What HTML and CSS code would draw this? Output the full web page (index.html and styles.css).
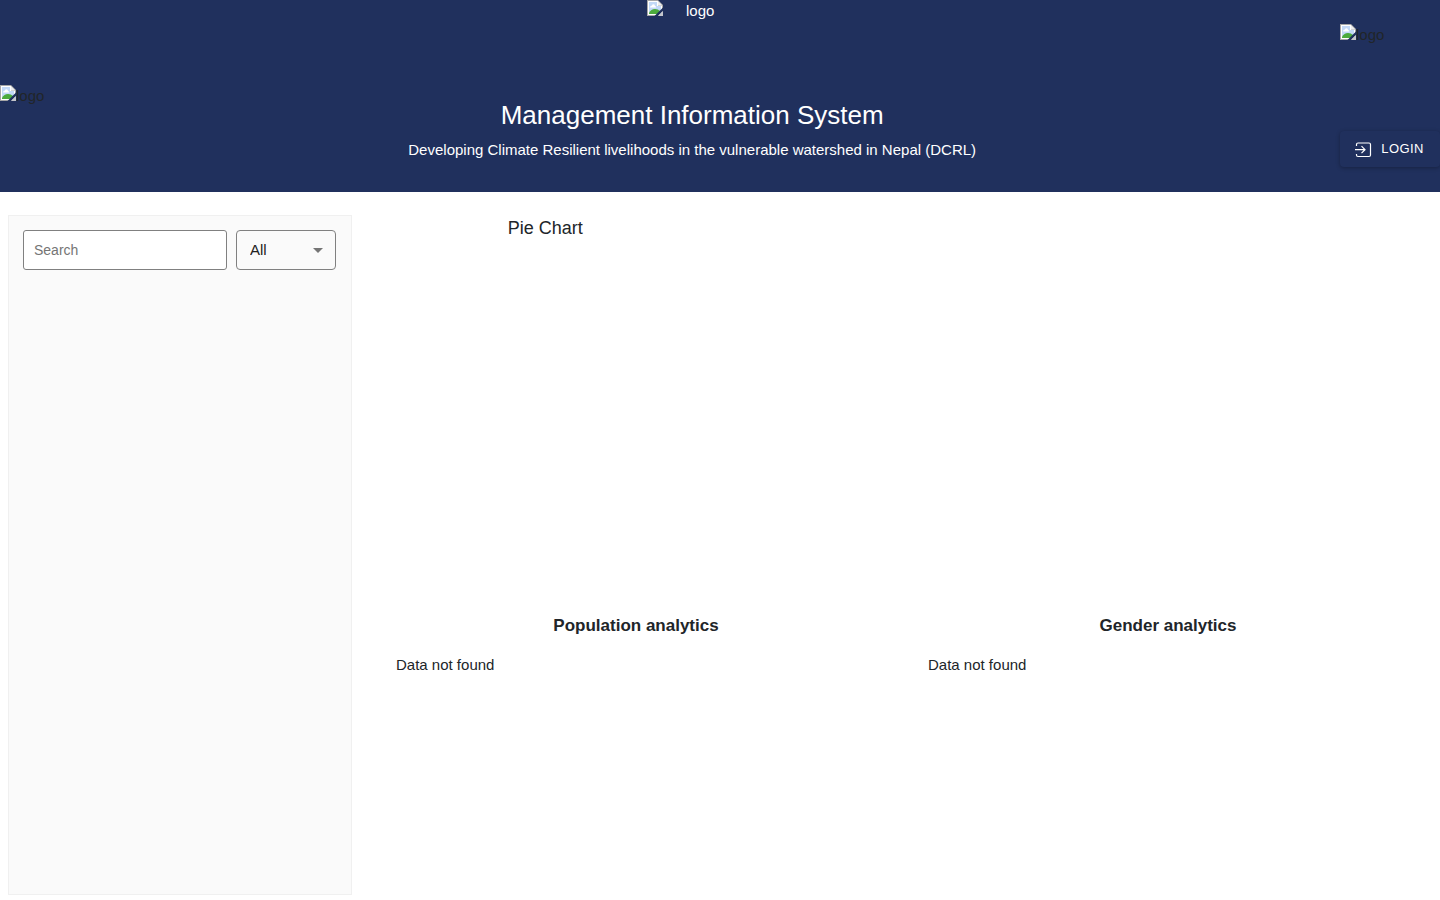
FILE: index.html
```html
<!DOCTYPE html>
<html lang="en">
<head>
<meta charset="utf-8">
<meta name="viewport" content="width=device-width, initial-scale=1">
<title>Management Information System</title>
<link rel="stylesheet" href="styles.css">
</head>
<body>
<svg class="sprite" aria-hidden="true">
  <symbol id="image-icon" viewBox="0 0 16 16">
    <path d="M0 0h11l5 5v11H0z" fill="#a6a6a6"/>
    <path d="M1 1h10v4.500h4V15H1z" fill="#fff"/>
    <path d="M2 2h8v4h4v8H2z" fill="#c3d9f7"/>
    <path d="M11 1v4h4z" fill="#eee"/>
    <path d="M3 7.500q0-1.700 1.600-1.700Q5 4 6.500 4.200 8 4.300 8 6q1.200 0 1.200 1.500z" fill="#fff"/>
    <path d="M2 14v-1q2-4 6-4 3 0 5 2v3z" fill="#4cab3c"/>
    <path d="M7.500 16L16 7.500V11L11 16z" fill="#20305d"/>
    <path d="M11 16L16 11V16z" fill="#c4c6cc"/>
  </symbol>
</svg>

<header class="header">
  <div class="logo"><svg class="logo-icon"><use href="#image-icon"/></svg><span>logo</span></div>
  <div class="brand">
    <div class="logo logo-wide"><svg class="logo-icon"><use href="#image-icon"/></svg><span class="logo-label">logo</span></div>
    <h1 class="title">Management Information System</h1>
    <p class="subtitle">Developing Climate Resilient livelihoods in the vulnerable watershed in Nepal (DCRL)</p>
  </div>
  <div class="account">
    <div class="logo"><svg class="logo-icon"><use href="#image-icon"/></svg><span>logo</span></div>
    <button class="login" type="button">
      <svg class="login-icon" viewBox="0 0 18 18" fill="none" stroke="currentColor" aria-hidden="true">
        <path d="M2.500 6V4.500a1.500 1.500 0 0 1 1.500-1.500h11a1.500 1.500 0 0 1 1.500 1.500v10.500a1.500 1.500 0 0 1-1.500 1.500H4a1.500 1.500 0 0 1-1.500-1.500V14" stroke-width="1.200"/>
        <path d="M1 9.700h9.500M7.500 6.200L11 9.700l-3.500 3.500" stroke-width="1.200"/>
      </svg>
      Login
    </button>
  </div>
</header>

<div class="layout">
  <aside class="sidebar">
    <form class="filters">
      <input class="search" type="search" placeholder="Search" aria-label="Search">
      <div class="select-wrap">
        <select class="select" aria-label="Filter"><option>All</option></select>
        <svg class="select-arrow" viewBox="0 0 24 24" aria-hidden="true"><path d="M7 10l5 5 5-5z" fill="currentColor"/></svg>
      </div>
    </form>
  </aside>
  <main class="main">
    <section class="charts">
      <h2 class="chart-title">Pie Chart</h2>
    </section>
    <div class="analytics">
      <section class="panel">
        <h3 class="panel-title">Population analytics</h3>
        <p class="panel-text">Data not found</p>
      </section>
      <section class="panel">
        <h3 class="panel-title">Gender analytics</h3>
        <p class="panel-text">Data not found</p>
      </section>
    </div>
  </main>
</div>
</body>
</html>
```

FILE: styles.css
```css
* { box-sizing: border-box; }

body {
  margin: 0;
  min-height: 100vh;
  display: flex;
  flex-direction: column;
  background: #fff;
  color: #212529;
  font: 15px/22px "Liberation Sans", Arial, sans-serif;
}

h1, h2, h3, p { margin: 0; font-weight: 400; }

.sprite { display: none; }

.header {
  display: flex;
  align-items: center;
  justify-content: space-between;
  min-height: 192px;
  background: #20305d;
}

.logo { display: flex; align-items: flex-start; }
.logo-icon { width: 16px; height: 16px; flex: none; }

.brand {
  align-self: stretch;
  display: flex;
  flex-direction: column;
  align-items: center;
  color: #fff;
  text-align: center;
}
.logo-wide { width: 90px; height: 100px; }
.logo-label { flex: 1; }
.title { font-size: 26px; line-height: 30px; }
.subtitle { margin-top: 9px; }

.account {
  display: flex;
  flex-direction: column;
  gap: 85px;
  width: 100px;
  padding-bottom: 1px;
}

.login {
  display: flex;
  align-items: center;
  justify-content: center;
  gap: 9px;
  height: 36px;
  padding: 0 2px 0 0;
  border: 0;
  border-radius: 4px;
  background: #20305d;
  box-shadow: 0 1px 4px rgba(0, 0, 0, 0.3);
  color: #fff;
  font: 13px/22px "Liberation Sans", Arial, sans-serif;
  letter-spacing: 0.4px;
  text-transform: uppercase;
}
.login-icon { width: 18px; height: 18px; }

.layout { flex: 1; display: flex; padding: 23px 8px 5px; }

.sidebar {
  flex: 0 0 344px;
  padding: 14px;
  border: 1px solid #f0f0f0;
  background: #fafafa;
}
.filters { display: flex; gap: 9px; }

.search {
  flex: 0 0 204px;
  height: 40px;
  padding: 0 10px;
  border: 1px solid #808080;
  border-radius: 3px;
  background: #fff;
  font: 14px/20px "Liberation Sans", Arial, sans-serif;
  appearance: none;
}
.search::placeholder { color: #757575; }

.select-wrap { position: relative; flex: 0 0 100px; }
.select {
  width: 100%;
  height: 40px;
  padding: 0 32px 0 13px;
  border: 1px solid #808080;
  border-radius: 4px;
  background: transparent;
  color: #212121;
  font: 15px/22px "Liberation Sans", Arial, sans-serif;
  appearance: none;
}
.select-arrow {
  position: absolute;
  top: 8px;
  right: 6px;
  width: 24px;
  height: 24px;
  color: #757575;
  pointer-events: none;
}

.main { flex: 1; padding-left: 16px; }

.charts {
  display: grid;
  grid-template-columns: repeat(3, 1fr);
  min-height: 400px;
}
.chart-title { font-size: 18px; line-height: 26px; text-align: center; }

.analytics { display: grid; grid-template-columns: repeat(2, 1fr); }
.panel { padding-left: 4px; }
.panel-title {
  font-size: 17px;
  font-weight: 700;
  line-height: 22px;
  text-align: center;
}
.panel-text { margin-top: 17px; padding-left: 24px; }
```
